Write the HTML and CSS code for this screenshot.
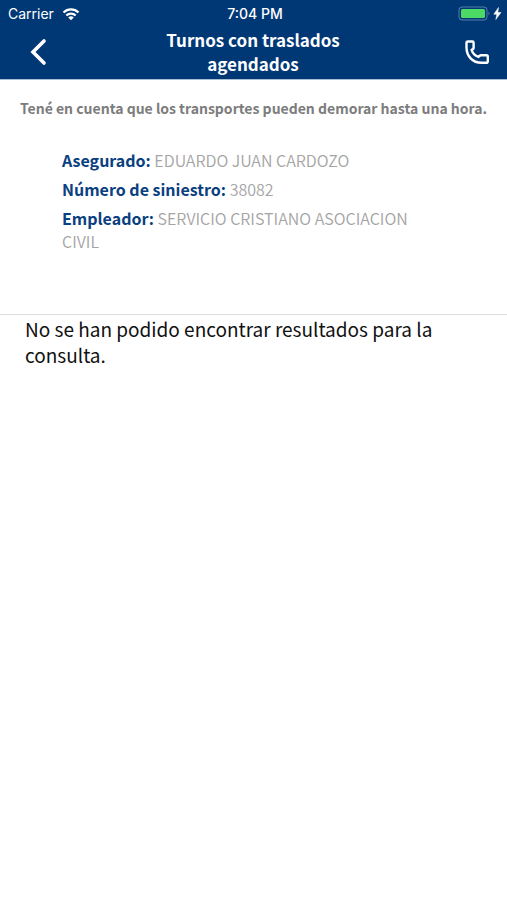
FILE: index.html
```html
<!DOCTYPE html>
<html lang="es">
<head>
    <meta charset="UTF-8">
    <meta name="viewport" content="width=device-width, initial-scale=1.0">
    <title>Turnos con traslados agendados</title>

    <link rel="stylesheet" href="styles.css">
</head>
<body>
    <header>
        <div class="status-bar">
            <div class="carrier">
                <span>Carrier</span>
                <svg class="wifi" viewBox="0 0 18 13" width="18" height="13" aria-hidden="true">
                    <path d="M1.5 4.5A10.6 10.6 0 0 1 16.5 4.5M4.3 7.5A6.6 6.6 0 0 1 13.7 7.5" fill="none" stroke="currentColor" stroke-width="2.2"/>
                    <path d="M9 12.3L6.2 9.5A4 4 0 0 1 11.8 9.5Z" fill="currentColor"/>
                </svg>
            </div>
            <time>7:04 PM</time>
            <div class="battery">
                <svg viewBox="0 0 44 16" width="44" height="16" aria-hidden="true">
                    <rect x="1" y="1" width="28" height="13" rx="3" fill="none" stroke="#557eaa"/>
                    <rect x="3" y="3" width="24" height="9" rx="1.5" fill="#4cd964"/>
                    <path d="M30.5 5.5Q32.5 7.5 30.5 9.5Z" fill="#557eaa"/>
                    <path d="M40.5 1.5L35.8 8.2H38.8L37.8 13.5L43 6.5H39.8Z" fill="#fff" stroke="#fff" stroke-width="0.5"/>
                </svg>
            </div>
        </div>
        <nav class="nav-bar">
            <button class="back-button" type="button" aria-label="Volver">
                <svg viewBox="0 0 18 28" width="18" height="28" aria-hidden="true">
                    <path d="M15 3L4 14L15 25" fill="none" stroke="currentColor" stroke-width="3.6" stroke-linecap="round"/>
                </svg>
            </button>
            <h1>Turnos con traslados agendados</h1>
            <button class="phone-button" type="button" aria-label="Llamar">
                <svg viewBox="0 0 26 26" width="26" height="26" aria-hidden="true">
                    <path d="M4 2.5H8.4Q9.6 2.5 9.6 3.7V9Q9.6 10 8.6 10.3L7.6 10.8Q9.2 15.9 14.5 18L15.6 16.9Q16.2 16.3 17 16.3H22.4Q23.8 16.3 23.8 17.6V22.2Q23.8 23.8 22.2 23.8H17.5C8.5 23.8 2.5 17 2.5 8.5V4Q2.5 2.5 4 2.5Z" fill="none" stroke="currentColor" stroke-width="2.4" stroke-linejoin="round"/>
                </svg>
            </button>
        </nav>
    </header>

    <main>
        <p class="notice">Tené en cuenta que los transportes pueden demorar hasta una hora.</p>

        <section class="details">
            <p><strong>Asegurado:</strong> EDUARDO JUAN CARDOZO</p>
            <p><strong>Número de siniestro:</strong> 38082</p>
            <p><strong>Empleador:</strong> SERVICIO CRISTIANO ASOCIACION CIVIL</p>
        </section>

        <p class="empty-message">No se han podido encontrar resultados para la consulta.</p>
    </main>
</body>
</html>
```
FILE: styles.css
```css
body {
    font-family: "Noto Sans CJK SC", "Noto Sans", sans-serif;
    margin: 0;
    background-color: #fff;
    color: #111;
}

header {
    background-color: #003876;
    color: #fff;
    border-bottom: 1px solid #a9bdd4;
}

/* Status bar */
.status-bar {
    display: grid;
    grid-template-columns: 1fr auto 1fr;
    align-items: center;
    height: 28px;
    padding: 0 5px 0 8px;
    font-family: Inter, sans-serif;
    font-size: 14px;
    line-height: 20px;
}

.status-bar time {
    font-weight: 500;
}

.carrier {
    display: flex;
    align-items: center;
    gap: 8px;
}

.battery {
    display: flex;
    justify-content: flex-end;
}

/* Title with back and call buttons */
.nav-bar {
    display: grid;
    grid-template-columns: 44px 1fr 44px;
    align-items: center;
    padding: 0 17px 3px 16px;
}

.nav-bar button {
    display: flex;
    justify-content: center;
    padding: 0;
    border: none;
    background: none;
    color: #fff;
    cursor: pointer;
}

.nav-bar .phone-button {
    justify-content: flex-end;
}

h1 {
    max-width: 220px;
    margin: 0 auto;
    font-size: 17px;
    font-weight: bold;
    line-height: 24px;
    text-align: center;
}

/* Content */
.notice {
    margin: 0;
    padding: 17px 16px 0;
    color: #7c7c7c;
    font-size: 14px;
    font-weight: bold;
    line-height: 22px;
    text-align: center;
}

.details {
    padding: 30px 80px 61px 62px;
    border-bottom: 1px solid #ddd;
    color: #a4a4a4;
    font-size: 16px;
    font-weight: 350;
    line-height: 23px;
}

.details p {
    margin: 0 0 6px;
}

.details p:last-child {
    margin-bottom: 0;
}

.details strong {
    color: #0a4080;
    font-weight: bold;
}

.empty-message {
    margin: 0;
    padding: 1px 25px;
    font-size: 19px;
    line-height: 26px;
}
```
